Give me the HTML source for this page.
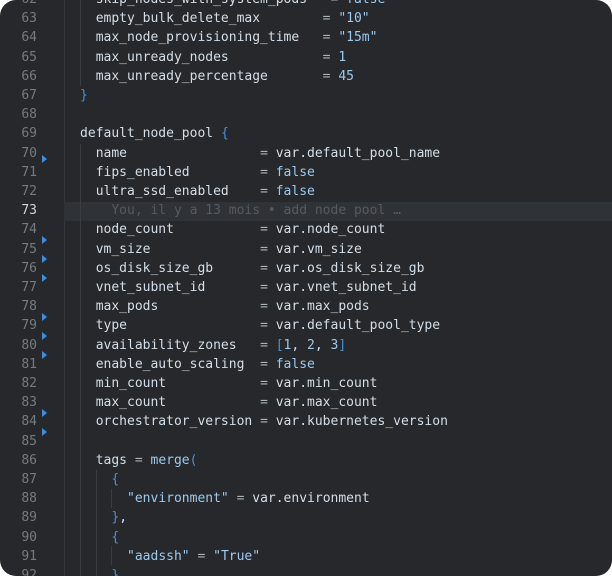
<!DOCTYPE html>
<html><head><meta charset="utf-8"><style>
html,body{margin:0;padding:0;background:#fff;}
.p{position:relative;width:612px;height:576px;background:#26282b;border-radius:16px;overflow:hidden;font-family:"DejaVu Sans Mono","Liberation Mono",monospace;font-size:13px;}
.r{position:absolute;left:0;width:612px;height:19.2px;line-height:19.2px;white-space:pre;}
.n{position:absolute;left:0;width:37px;text-align:right;color:#767b80;}
.c{position:absolute;left:64.4px;color:#d4dee8;}
.e{color:#aab2ba}.v{color:#9cc9ee}.b{color:#4a90d9}.s{color:#d4dee8}
.g{position:absolute;width:1px;background:#3a3d41;}
.a{position:absolute;left:42px;width:0;height:0;border-top:4px solid transparent;border-bottom:4px solid transparent;border-left:5px solid #3c8ee0;}
</style></head><body><div class="p">
<div class="g" style="left:64px;top:0;height:576px;background:#34373b"></div>
<div style="position:absolute;left:64px;top:201.6px;width:548px;height:19.2px;background:#2f3236"></div>
<div class="g" style="left:80px;top:0;height:86px"></div>
<div class="g" style="left:80px;top:144px;height:432px"></div>
<div class="g" style="left:96px;top:470px;height:106px"></div>
<div class="g" style="left:111px;top:489px;height:19px"></div>
<div class="g" style="left:111px;top:546px;height:19px"></div>
<div class="a" style="top:155px"></div>
<div class="a" style="top:236px"></div>
<div class="a" style="top:255px"></div>
<div class="a" style="top:274px"></div>
<div class="a" style="top:313px"></div>
<div class="a" style="top:332px"></div>
<div class="a" style="top:351px"></div>
<div class="a" style="top:409px"></div>
<div class="a" style="top:428px"></div>
<div class="r" style="top:-10px"><span class="n">62</span><span class="c">    skip_nodes_with_system_pods   <span class="e">=</span> <span class="v">false</span></span></div>
<div class="r" style="top:9.2px"><span class="n">63</span><span class="c">    empty_bulk_delete_max        <span class="e">=</span> <span class="v">"10"</span></span></div>
<div class="r" style="top:28.4px"><span class="n">64</span><span class="c">    max_node_provisioning_time   <span class="e">=</span> <span class="v">"15m"</span></span></div>
<div class="r" style="top:47.6px"><span class="n">65</span><span class="c">    max_unready_nodes            <span class="e">=</span> <span class="v">1</span></span></div>
<div class="r" style="top:66.8px"><span class="n">66</span><span class="c">    max_unready_percentage       <span class="e">=</span> <span class="v">45</span></span></div>
<div class="r" style="top:86px"><span class="n">67</span><span class="c">  <span class="b">}</span></span></div>
<div class="r" style="top:105.2px"><span class="n">68</span></div>
<div class="r" style="top:124.4px"><span class="n">69</span><span class="c">  default_node_pool <span class="b">{</span></span></div>
<div class="r" style="top:143.6px"><span class="n">70</span><span class="c">    name                 <span class="e">=</span> var.default_pool_name</span></div>
<div class="r" style="top:162.8px"><span class="n">71</span><span class="c">    fips_enabled         <span class="e">=</span> <span class="v">false</span></span></div>
<div class="r" style="top:182px"><span class="n">72</span><span class="c">    ultra_ssd_enabled    <span class="e">=</span> <span class="v">false</span></span></div>
<div class="r" style="top:201.2px"><span class="n" style="color:#d0d4d8">73</span><span class="c" style="color:#575b60">      You, il y a 13 mois • add node pool …</span></div>
<div class="r" style="top:220.4px"><span class="n">74</span><span class="c">    node_count           <span class="e">=</span> var.node_count</span></div>
<div class="r" style="top:239.6px"><span class="n">75</span><span class="c">    vm_size              <span class="e">=</span> var.vm_size</span></div>
<div class="r" style="top:258.8px"><span class="n">76</span><span class="c">    os_disk_size_gb      <span class="e">=</span> var.os_disk_size_gb</span></div>
<div class="r" style="top:278px"><span class="n">77</span><span class="c">    vnet_subnet_id       <span class="e">=</span> var.vnet_subnet_id</span></div>
<div class="r" style="top:297.2px"><span class="n">78</span><span class="c">    max_pods             <span class="e">=</span> var.max_pods</span></div>
<div class="r" style="top:316.4px"><span class="n">79</span><span class="c">    type                 <span class="e">=</span> var.default_pool_type</span></div>
<div class="r" style="top:335.6px"><span class="n">80</span><span class="c">    availability_zones   <span class="e">=</span> <span class="b">[</span><span class="v">1</span>, <span class="v">2</span>, <span class="v">3</span><span class="b">]</span></span></div>
<div class="r" style="top:354.8px"><span class="n">81</span><span class="c">    enable_auto_scaling  <span class="e">=</span> <span class="v">false</span></span></div>
<div class="r" style="top:374px"><span class="n">82</span><span class="c">    min_count            <span class="e">=</span> var.min_count</span></div>
<div class="r" style="top:393.2px"><span class="n">83</span><span class="c">    max_count            <span class="e">=</span> var.max_count</span></div>
<div class="r" style="top:412.4px"><span class="n">84</span><span class="c">    orchestrator_version <span class="e">=</span> var.kubernetes_version</span></div>
<div class="r" style="top:431.6px"><span class="n">85</span></div>
<div class="r" style="top:450.8px"><span class="n">86</span><span class="c">    tags <span class="e">=</span> <span class="v">merge</span><span class="b">(</span></span></div>
<div class="r" style="top:470px"><span class="n">87</span><span class="c">      <span class="b">{</span></span></div>
<div class="r" style="top:489.2px"><span class="n">88</span><span class="c">        <span class="v">"environment"</span> <span class="e">=</span> var.environment</span></div>
<div class="r" style="top:508.4px"><span class="n">89</span><span class="c">      <span class="b">}</span>,</span></div>
<div class="r" style="top:527.6px"><span class="n">90</span><span class="c">      <span class="b">{</span></span></div>
<div class="r" style="top:546.8px"><span class="n">91</span><span class="c">        <span class="v">"aadssh"</span> <span class="e">=</span> <span class="v">"True"</span></span></div>
<div class="r" style="top:566px"><span class="n">92</span><span class="c">      <span class="b">}</span></span></div>
</div></body></html>
